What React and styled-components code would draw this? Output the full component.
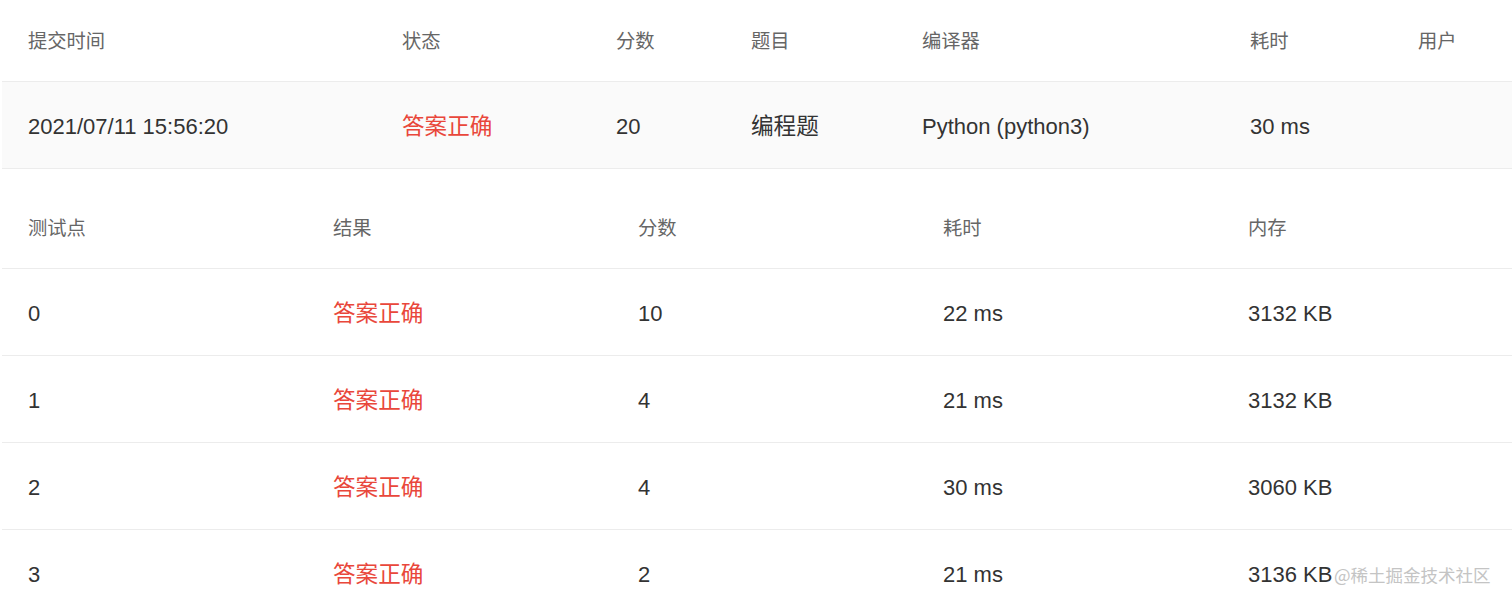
import React from "react";
import styled, { createGlobalStyle } from "styled-components";

const Global = createGlobalStyle`
  html, body { margin: 0; padding: 0; background: #fff; }
  body {
    font-family: "Liberation Sans", "Noto Sans CJK SC", sans-serif;
    overflow: hidden;
  }
`;

const Page = styled.div`
  position: relative;
  width: 1512px;
  height: 610px;
  overflow: hidden;
  padding-left: 2px;
  box-sizing: border-box;
`;

const Table = styled.div`
  display: flex;
  flex-direction: column;
  width: ${(p) => p.$width}px;
  margin-top: ${(p) => p.$mt || 0}px;
`;

const Row = styled.div`
  display: grid;
  grid-template-columns: ${(p) => p.$cols};
  align-items: center;
  height: ${(p) => p.$h}px;
  border-bottom: 1px solid #ececec;
  background: ${(p) => (p.$shade ? "#fafafa" : "#fff")};
`;

const HeadCell = styled.div`
  padding-left: 26px;
  font-family: "Noto Sans CJK SC", sans-serif;
  font-size: 19.3px;
  line-height: 1;
  color: #666;
  white-space: nowrap;
`;

const Cell = styled.div`
  padding-left: 26px;
  padding-top: ${(p) => (p.$cjk ? "0" : "4px")};
  font-family: ${(p) =>
    p.$cjk ? '"Noto Sans CJK SC", sans-serif' : '"Liberation Sans", "Noto Sans CJK SC", sans-serif'};
  font-size: ${(p) => (p.$cjk ? "22.6px" : "22px")};
  line-height: 1;
  color: ${(p) => (p.$ok ? "#e9473b" : "#333")};
  white-space: nowrap;
`;

const Watermark = styled.div`
  position: absolute;
  left: 1334px;
  top: 566px;
  font-family: "Noto Sans CJK SC", sans-serif;
  font-size: 17.5px;
  line-height: 1;
  color: #c4c4c4;
  white-space: nowrap;
  text-shadow: 0 0 2px #fff;
`;

const cols1 = "374px 214px 135px 171px 328px 168px 200px";
const cols2 = "305px 305px 305px 305px 305px";

const tests = [
  ["0", "10", "22 ms", "3132 KB"],
  ["1", "4", "21 ms", "3132 KB"],
  ["2", "4", "30 ms", "3060 KB"],
  ["3", "2", "21 ms", "3136 KB"],
];

export default function App() {
  return (
    <>
      <Global />
      <Page>
        <Table $width={1590}>
          <Row $cols={cols1} $h={81}>
            {["提交时间", "状态", "分数", "题目", "编译器", "耗时", "用户"].map((t) => (
              <HeadCell key={t}>{t}</HeadCell>
            ))}
          </Row>
          <Row $cols={cols1} $h={86} $shade>
            <Cell>2021/07/11 15:56:20</Cell>
            <Cell $ok $cjk>答案正确</Cell>
            <Cell>20</Cell>
            <Cell $cjk>编程题</Cell>
            <Cell>Python (python3)</Cell>
            <Cell>30 ms</Cell>
            <Cell></Cell>
          </Row>
        </Table>
        <Table $width={1525} $mt={19}>
          <Row $cols={cols2} $h={80}>
            {["测试点", "结果", "分数", "耗时", "内存"].map((t) => (
              <HeadCell key={t}>{t}</HeadCell>
            ))}
          </Row>
          {tests.map(([id, score, time, mem]) => (
            <Row key={id} $cols={cols2} $h={86}>
              <Cell>{id}</Cell>
              <Cell $ok $cjk>答案正确</Cell>
              <Cell>{score}</Cell>
              <Cell>{time}</Cell>
              <Cell>{mem}</Cell>
            </Row>
          ))}
        </Table>
        <Watermark>@稀土掘金技术社区</Watermark>
      </Page>
    </>
  );
}
